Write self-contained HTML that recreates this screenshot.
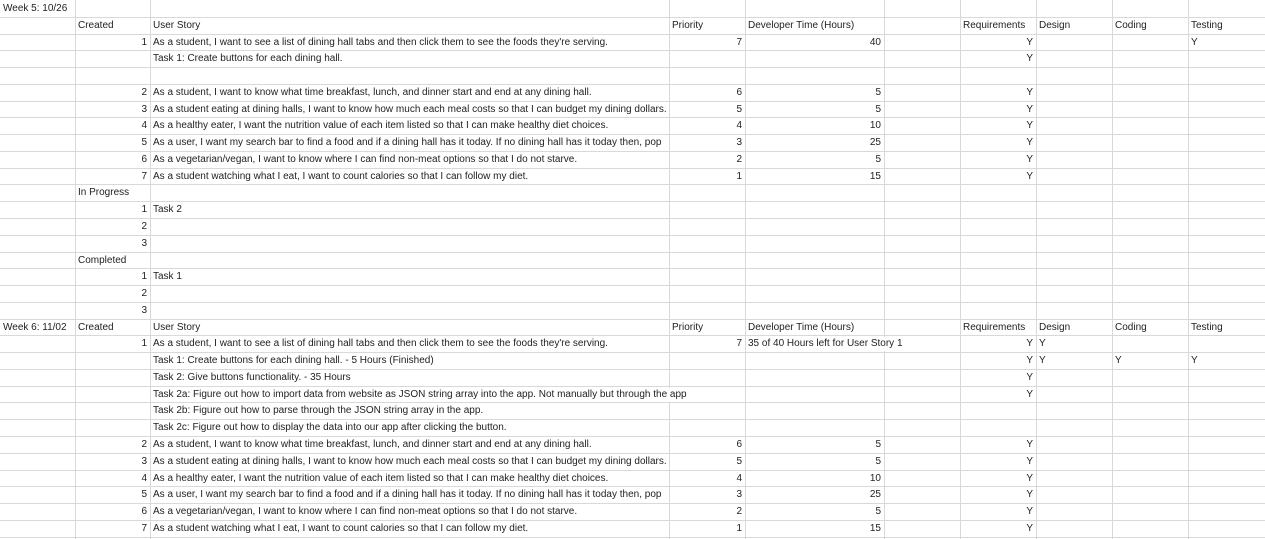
<!DOCTYPE html>
<html><head><meta charset="utf-8"><style>
html,body{margin:0;padding:0;background:#fff;width:1265px;height:539px;overflow:hidden;position:relative}
.v{position:absolute;top:0;width:1px;height:539px;background:#d9d9d9}
.h{position:absolute;left:0;width:1265px;height:1px;background:#d9d9d9}
.t{position:absolute;font:10px "Liberation Sans",Arial,sans-serif;color:#222;white-space:nowrap;line-height:14px;height:14px;background:#fff;padding:0 2px}
</style></head><body>
<script>
var cols=[0,75,150,669,745,884,960,1036,1112,1188,1265];
var P=16.77;
var rows=[
["Week 5: 10/26"],
["","Created","User Story","Priority","Developer Time (Hours)","","Requirements","Design","Coding","Testing"],
["","","1|As a student, I want to see a list of dining hall tabs and then click them to see the foods they're serving.","7","40","","Y","","","Y"],
["","","|Task 1: Create buttons for each dining hall.","","","","Y"],
[],
["","","2|As a student, I want to know what time breakfast, lunch, and dinner start and end at any dining hall.","6","5","","Y"],
["","","3|As a student eating at dining halls, I want to know how much each meal costs so that I can budget my dining dollars.","5","5","","Y"],
["","","4|As a healthy eater, I want the nutrition value of each item listed so that I can make healthy diet choices.","4","10","","Y"],
["","","5|As a user, I want my search bar to find a food and if a dining hall has it today. If no dining hall has it today then, pop","3","25","","Y"],
["","","6|As a vegetarian/vegan, I want to know where I can find non-meat options so that I do not starve.","2","5","","Y"],
["","","7|As a student watching what I eat, I want to count calories so that I can follow my diet.","1","15","","Y"],
["","In Progress"],
["","","1|Task 2"],["","","2|"],["","","3|"],
["","Completed"],
["","","1|Task 1"],["","","2|"],["","","3|"],
["Week 6: 11/02","Created","User Story","Priority","Developer Time (Hours)","","Requirements","Design","Coding","Testing"],
["","","1|As a student, I want to see a list of dining hall tabs and then click them to see the foods they're serving.","7","L35 of 40 Hours left for User Story 1","","Y","Y"],
["","","|Task 1: Create buttons for each dining hall. - 5 Hours (Finished)","","","","Y","Y","Y","Y"],
["","","|Task 2: Give buttons functionality. - 35 Hours","","","","Y"],
["","","|Task 2a: Figure out how to import data from website as JSON string array into the app. Not manually but through the app","","","","Y"],
["","","|Task 2b: Figure out how to parse through the JSON string array in the app."],
["","","|Task 2c: Figure out how to display the data into our app after clicking the button."],
["","","2|As a student, I want to know what time breakfast, lunch, and dinner start and end at any dining hall.","6","5","","Y"],
["","","3|As a student eating at dining halls, I want to know how much each meal costs so that I can budget my dining dollars.","5","5","","Y"],
["","","4|As a healthy eater, I want the nutrition value of each item listed so that I can make healthy diet choices.","4","10","","Y"],
["","","5|As a user, I want my search bar to find a food and if a dining hall has it today. If no dining hall has it today then, pop","3","25","","Y"],
["","","6|As a vegetarian/vegan, I want to know where I can find non-meat options so that I do not starve.","2","5","","Y"],
["","","7|As a student watching what I eat, I want to count calories so that I can follow my diet.","1","15","","Y"]
];
var h='';
for(var i=1;i<10;i++)h+='<div class="v" style="left:'+cols[i]+'px"></div>';
var lines='';
for(var r=1;r<=32;r++)lines+='<div class="h" style="top:'+Math.round(r*P)+'px"></div>';
function cell(txt,ci,top,right){
 var s='top:'+top+'px;';
 if(right){s+='right:'+(1265-cols[ci+1]+1)+'px;';}
 else s+='left:'+(cols[ci]+1)+'px;';
 return '<div class="t" style="'+s+'">'+txt.replace(/&/g,'&amp;').replace(/</g,'&lt;')+'</div>';
}
rows.forEach(function(row,r){
 var top=Math.round(r*P)+2;
 row.forEach(function(c,i){
  if(c==='')return;
  if(i===2&&c.indexOf('|')>=0){
   var p=c.split('|');
   if(p[0])h+=cell(p[0],1,top,true);
   if(p[1])h+=cell(p[1],2,top,false);
   return;
  }
  if((i===3||i===4||i===6) && /^(\d+|Y)$/.test(c)){h+=cell(c,i,top,true);return;}
  if(c[0]==='L'&&i===4){h+=cell(c.slice(1),i,top,false);return;}
  h+=cell(c,i,top,false);
 });
});
document.body.innerHTML+=lines+h;
</script>
</body></html>
